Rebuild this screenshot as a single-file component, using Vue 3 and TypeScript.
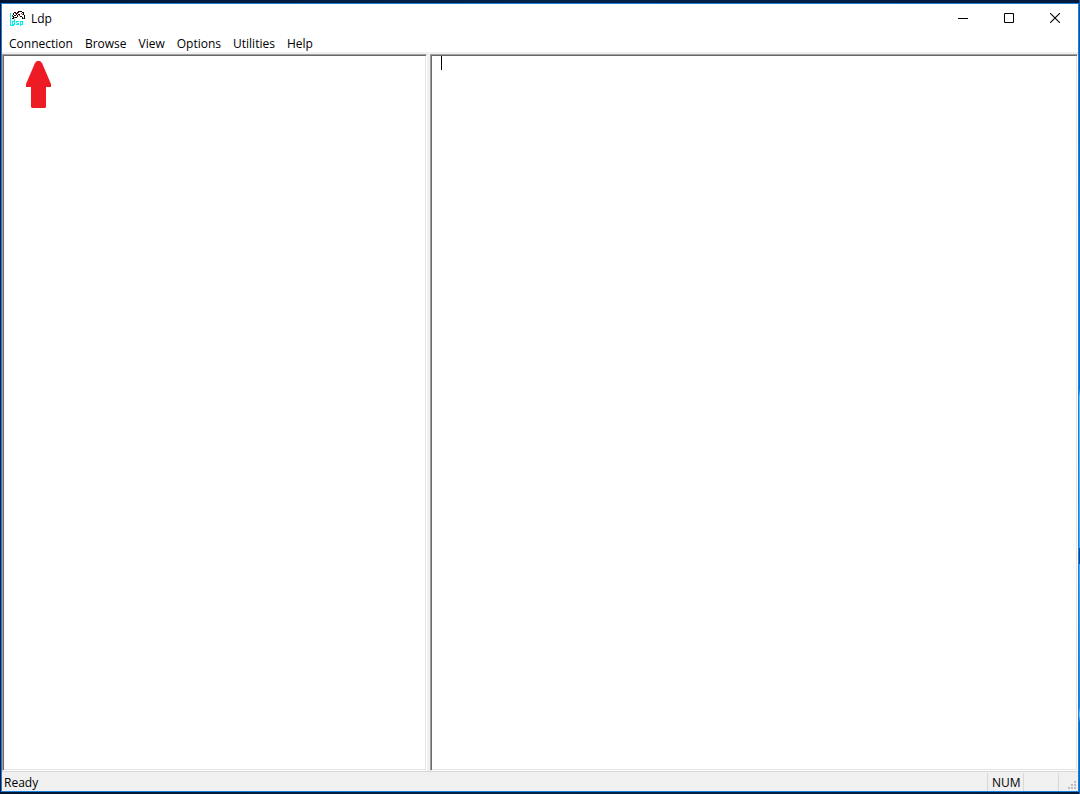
<script setup lang="ts">
import { onMounted, ref } from 'vue'

const menus: string[] = ['Connection', 'Browse', 'View', 'Options', 'Utilities', 'Help']
const output = ref('')
const outputBox = ref<HTMLTextAreaElement | null>(null)

onMounted(() => outputBox.value?.focus())
</script>

<template>
  <div class="desktop">
    <main class="window">
      <header class="titlebar">
        <svg class="app-icon" viewBox="0 0 16 16" shape-rendering="crispEdges" aria-hidden="true">
          <path fill="#00f0f0" d="M0 2h1v13H0zM1 14h3v1H1zM2 10h2v1H2zM2 11h1v2H2zM2 13h3v1H2zM4 8h1v6H4zM6 10h3v1H6zM6 11h1v1H6zM7 12h2v1H7zM6 13h3v1H6zM10 10h1v5h-1zM11 10h2v1h-2zM12 11h1v2h-1zM11 13h2v1h-2z" />
          <path fill="#000" d="M4 1h2v1H4zM3 2h1v2H3zM7 1h2v1H7zM8 0h4v1H8zM12 1h2v1h-2zM13 2h1v2h-1zM14 4h1v4h-1zM6 2h1v2H6zM4 4h2v1H4zM3 5h1v2H3zM2 7h2v1H2zM8 3h2v1H8zM7 4h1v2H7zM5 6h2v1H5zM10 5h2v1h-2zM12 6h1v2h-1z" />
          <path fill="#e01010" d="M5 2h1v1H5zM7 2h1v1H7zM9 4h1v1H9zM11 2h1v1h-1zM4 6h1v1H4z" />
          <path fill="#148048" d="M2 4h1v2H2zM12 3h1v1h-1zM13 7h1v1h-1z" />
        </svg>
        <h1 class="title">Ldp</h1>
        <div class="controls">
          <button type="button" aria-label="Minimize">
            <svg viewBox="0 0 10 10" shape-rendering="crispEdges"><path d="M0 5h10v1H0z" /></svg>
          </button>
          <button type="button" aria-label="Maximize">
            <svg viewBox="0 0 10 10"><path d="M.5.5h9v9h-9z" fill="none" stroke="#000" /></svg>
          </button>
          <button type="button" aria-label="Close">
            <svg viewBox="0 0 10 10"><path d="M0 0l10 10M10 0L0 10" fill="none" stroke="#000" stroke-width="1.1" /></svg>
          </button>
        </div>
      </header>

      <nav class="menubar">
        <button v-for="menu in menus" :key="menu" type="button">{{ menu }}</button>
      </nav>

      <div class="panes">
        <section class="pane tree" aria-label="Directory tree">
          <svg class="pointer" viewBox="0 0 25 47" aria-hidden="true">
            <path fill="#ed1c24" d="M11 0h3l2 2 9 21v3h-5v20l-1 1H6l-1-1V26H0v-3L9 2z" />
          </svg>
        </section>
        <section class="pane output">
          <textarea ref="outputBox" v-model="output" aria-label="Output" spellcheck="false"></textarea>
          <span class="caret" aria-hidden="true"></span>
        </section>
      </div>

      <footer class="status">
        <span class="message">Ready</span>
        <span class="cell num">NUM</span>
        <span class="cell scroll"></span>
        <span class="cell grip">
          <svg viewBox="0 0 8 8" shape-rendering="crispEdges" aria-hidden="true">
            <path fill="#bfbfbf" d="M6 0h2v2H6zM3 3h2v2H3zM6 3h2v2H6zM0 6h2v2H0zM3 6h2v2H3zM6 6h2v2H6z" />
          </svg>
        </span>
      </footer>
    </main>
  </div>
</template>

<style>
body {
  background: #001b3d;
}
</style>

<style scoped>
.desktop {
  box-sizing: border-box;
  height: 100vh;
  padding: 3px 1px 2px;
  background:
    linear-gradient(#0a4f9c, #0878d8 30%, #0878d8 49%, #60c8ff 50%, #40a8f0 69%, #064a94 69%, #064a94 71%, #48a8f0 71%, #1a80d8 89%, #80d0ff 90%, #0868c0 91%) right / 1px 100% no-repeat,
    linear-gradient(90deg, #001633, #00234a 50%, #001a3c);
  font-family: "Open Sans", "Noto Sans", sans-serif;
  font-size: 12px;
  line-height: 16px;
  color: #000;
}

.window {
  box-sizing: border-box;
  display: flex;
  flex-direction: column;
  height: 100%;
  border: 1px solid #1880dc;
  background: #fff;
}

button {
  border: 0;
  margin: 0;
  background: transparent;
  color: inherit;
  font: inherit;
}

.titlebar {
  display: flex;
  align-items: center;
  height: 29px;
  padding-left: 8px;
}

.app-icon {
  width: 16px;
  height: 16px;
}

.title {
  flex: 1;
  margin: 0 0 0 5px;
  font-size: 12px;
  font-weight: 400;
}

.controls {
  display: flex;
  align-self: flex-start;
}

.controls button {
  display: flex;
  align-items: center;
  justify-content: center;
  width: 46px;
  height: 28px;
  padding: 0;
}

.controls svg {
  width: 10px;
  height: 10px;
}

.menubar {
  box-sizing: border-box;
  display: flex;
  height: 21px;
  padding: 2px 1px 0;
  border-bottom: 2px solid #f0f0f0;
}

.menubar button {
  padding: 0 6px;
}

.panes {
  display: grid;
  grid-template-columns: 425px 1fr;
  column-gap: 3px;
  flex: 1;
  min-height: 0;
  background: #f0f0f0;
}

.pane {
  position: relative;
  border: 1px solid;
  border-color: #a0a0a0 #fff #fff #a0a0a0;
  background: #fff;
  box-shadow: inset 1px 1px #696969, inset -1px -1px #e3e3e3;
}

.pointer {
  position: absolute;
  top: 6px;
  left: 23px;
  width: 25px;
  height: 47px;
}

.output textarea {
  display: block;
  box-sizing: border-box;
  width: 100%;
  height: 100%;
  padding: 1px 10px;
  border: 0;
  outline: 0;
  resize: none;
  background: transparent;
  color: inherit;
  caret-color: transparent;
  font: inherit;
}

.caret {
  position: absolute;
  top: 1px;
  left: 10px;
  width: 1px;
  height: 14px;
  background: #000;
}

.status {
  display: flex;
  align-items: stretch;
  height: 18px;
  padding-top: 1px;
  border-top: 1px solid #d7d7d7;
  background: #f0f0f0;
  line-height: 20px;
}

.message {
  flex: 1;
  padding-left: 2px;
}

.cell {
  box-sizing: border-box;
  border-left: 1px solid #d7d7d7;
}

.num {
  width: 36px;
  padding-left: 4px;
}

.scroll {
  width: 35px;
}

.grip {
  display: flex;
  align-items: flex-end;
  justify-content: flex-end;
  width: 20px;
  padding: 0 2px 2px 0;
}

.grip svg {
  width: 8px;
  height: 8px;
}
</style>
